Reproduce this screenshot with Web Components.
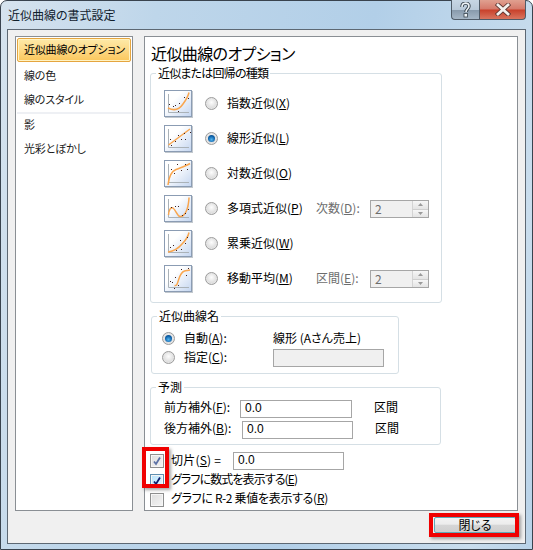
<!DOCTYPE html>
<html lang="ja">
<head>
<meta charset="utf-8">
<title>近似曲線の書式設定</title>
<style>
  html, body { margin: 0; padding: 0; background: #fff; }
  body {
    font: 12px/1 "Noto Sans CJK JP", "Liberation Sans", sans-serif;
    font-feature-settings: "palt";
    color: #000;
  }
</style>
</head>
<body>
<format-dialog caption="近似曲線の書式設定">
  <side-list slot="side">
    <side-item selected>近似曲線のオプション</side-item>
    <side-item>線の色</side-item>
    <side-item>線のスタイル</side-item>
    <side-sep></side-sep>
    <side-item>影</side-item>
    <side-item>光彩とぼかし</side-item>
  </side-list>

  <option-panel heading="近似曲線のオプション">
    <group-box legend="近似または回帰の種類" style="--w:292px;--h:230px;--pad:16px 0 0 13px;--ml:0;--ls:-0.8px">
      <trend-row type="exp">指数近似(<u>X</u>)</trend-row>
      <trend-row type="line" checked>線形近似(<u>L</u>)</trend-row>
      <trend-row type="log">対数近似(<u>O</u>)</trend-row>
      <trend-row type="poly">多項式近似(<u>P</u>)<span slot="sub">次数(<u>D</u>):</span><spin-box slot="spin" value="2"></spin-box></trend-row>
      <trend-row type="pow">累乗近似(<u>W</u>)</trend-row>
      <trend-row type="avg">移動平均(<u>M</u>)<span slot="sub">区間(<u>E</u>):</span><spin-box slot="spin" value="2"></spin-box></trend-row>
    </group-box>

    <group-box legend="近似曲線名" style="--w:248px;--h:58px;--pad:12px 0 0 10px;--ml:1px;--mt:13px">
      <name-row checked label="自動(A):"><span>線形 (Aさん売上)</span></name-row>
      <name-row label="指定(C):"><text-input disabled style="--iw:111px"></text-input></name-row>
    </group-box>

    <group-box legend="予測" style="--w:291px;--h:58px;--pad:10px 0 0 13px;--ml:0;--mt:13px">
      <forecast-row style="--lw:76px;--iw:112px">前方補外(<u>F</u>):</forecast-row>
      <forecast-row style="--lw:78px;--iw:111px">後方補外(<u>B</u>):</forecast-row>
    </group-box>

    <check-row style="--rh:20px;margin-top:6px;--ls:0.2px" checked state="dim">切片(<u>S</u>) =<text-input slot="after" value="0.0" style="--iw:111px"></text-input></check-row>
    <check-row style="--rh:19px;--ls:-0.9px" checked state="hot">グラフに数式を表示する(<u>E</u>)</check-row>
    <check-row style="--rh:19px;--ls:-0.3px">グラフに R-2 乗値を表示する(<u>R</u>)</check-row>
  </option-panel>

  <glass-button slot="footer">閉じる</glass-button>

  <red-mark slot="marks" style="left:142px;top:447px;width:27px;height:41px"></red-mark>
  <red-mark slot="marks" style="left:429px;top:513px;width:90px;height:24px"></red-mark>
</format-dialog>

<script>
(function () {
    function define(name, css, html, ready) {
        const template = document.createElement("template");
        template.innerHTML = `<style>${css}</style>${html}`;
        class Element extends HTMLElement {
            constructor() {
                super();
                this.attachShadow({ mode: "open" });
                this.shadowRoot.appendChild(template.content.cloneNode(true));
            }
            connectedCallback() {
                if (ready) ready(this, this.shadowRoot);
            }
        }
        customElements.define(name, Element);
    }

    /* Window */
    define("format-dialog", `
    :host {
        background: linear-gradient(100deg, #d6e3ee 0%, #bed6ea 25%, #b2cfe8 60%, #c9dded 90%, #b8d2e8 100%);
        border: 1px solid #39434e;
        border-radius: 7px 7px 0 0;
        box-sizing: border-box;
        display: flex;
        flex-direction: column;
        height: 550px;
        position: relative;
        width: 533px;
    }
    .titlebar {
        align-items: flex-start;
        display: flex;
        flex: none;
        height: 28px;
        justify-content: space-between;
    }
    .caption {
        color: #10202c;
        line-height: 16px;
        padding: 6px 0 0 7px;
    }
    .buttons {
        display: flex;
        height: 20px;
        margin-right: 6px;
        margin-top: -1px;
    }
    .help, .close {
        align-items: center;
        border: 1px solid #4f5b68;
        border-top: none;
        box-sizing: border-box;
        display: flex;
        justify-content: center;
    }
    .help {
        background: linear-gradient(#c7d6e4 0%, #b9c9d9 50%, #8799ab 52%, #a5b6c6 100%);
        border-radius: 0 0 0 4px;
        border-right: none;
        width: 28px;
    }
    .close {
        background: linear-gradient(#e0a090 0%, #d5796a 48%, #c8402a 52%, #d9755f 100%);
        border-radius: 0 0 4px 0;
        width: 47px;
    }
    .client {
        background: #f0f0f0;
        border: 1px solid #5d6873;
        display: flex;
        flex: 1;
        flex-direction: column;
        margin: 0 6px 5px 6px;
        min-height: 0;
        padding: 6px 7px 0 7px;
    }
    .main {
        display: flex;
        gap: 11px;
        height: 475px;
    }
    .footer {
        display: flex;
        justify-content: flex-end;
        padding: 6px 2px 0 0;
    }`, `
    <div class="titlebar">
        <div class="caption"></div>
        <div class="buttons">
            <div class="help">
                <svg width="13" height="16" viewBox="0 0 13 16"><path d="M3 5c0-5 7-5 7-1 0 3-3 3-3 6" fill="none" stroke="#39454f" stroke-width="3.4"/><path d="M3 5c0-5 7-5 7-1 0 3-3 3-3 6" fill="none" stroke="#eef3f7" stroke-width="1.6"/><rect x="5" y="11.500" width="3.500" height="3.500" fill="#eef3f7" stroke="#39454f" stroke-width=".8"/></svg>
            </div>
            <div class="close">
                <svg width="16" height="13" viewBox="0 0 16 13"><path d="M3 2l10 9M13 2L3 11" stroke="#5c3530" stroke-width="4.400" stroke-linecap="square"/><path d="M3 2l10 9M13 2L3 11" stroke="#f4f1ee" stroke-width="2.800" stroke-linecap="square"/></svg>
            </div>
        </div>
    </div>
    <div class="client">
        <div class="main"><slot name="side"></slot><slot></slot></div>
        <div class="footer"><slot name="footer"></slot></div>
    </div>
    <slot name="marks"></slot>
    `, (el, root) => {
        root.querySelector(".caption").textContent = el.getAttribute("caption");
    });

    /* Red annotation boxes drawn over the shot */
    define("red-mark", `
    :host {
        border: 4px solid #f00000;
        box-shadow: 2px 2px 3px rgba(60, 60, 60, 0.45);
        box-sizing: border-box;
        display: block;
        margin: -1px 0 0 -1px;
        pointer-events: none;
        position: absolute;
    }`, "");

    /* Left list */
    define("side-list", `
    :host {
        background: #fff;
        border: 1px solid #8a8f94;
        box-sizing: border-box;
        display: block;
        flex: none;
        font-size: 11px;
        height: 475px;
        letter-spacing: -0.2px;
        padding: 1px;
        width: 118px;
    }`, "<slot></slot>");

    define("side-item", `
    :host {
        border: 1px solid transparent;
        border-radius: 2px;
        box-sizing: border-box;
        color: #1a1a1a;
        display: block;
        height: 24px;
        line-height: 20px;
        padding-left: 6px;
        white-space: nowrap;
    }
    :host([selected]) {
        background: linear-gradient(#fdeaa8, #fdd986 50%, #fbc75c);
        border-color: #e5a53f;
        box-shadow: inset 0 0 0 1px #fff3c4;
        color: #000;
        margin-bottom: 2px;
    }`, "<slot></slot>");

    define("side-sep", `
    :host {
        background: #eef0f4;
        display: block;
        height: 2px;
        margin-bottom: -1px;
    }`, "");

    /* Right panel */
    define("option-panel", `
    :host {
        background: #fff;
        border: 1px solid #8a8f94;
        box-sizing: border-box;
        display: block;
        height: 475px;
        padding: 0 0 0 5px;
        width: 374px;
    }
    h2 {
        font-size: 16px;
        font-weight: 400;
        height: 36px;
        letter-spacing: -0.6px;
        line-height: 32px;
        margin: 0;
        padding-left: 1px;
        white-space: nowrap;
    }`, `<h2></h2><slot></slot>`, (el, root) => {
        root.querySelector("h2").textContent = el.getAttribute("heading");
    });

    define("group-box", `
    :host {
        border: 1px solid #d5dfe5;
        border-radius: 3px;
        box-sizing: border-box;
        display: block;
        height: var(--h);
        margin-left: var(--ml, 0);
        margin-top: var(--mt, 0);
        padding: var(--pad);
        position: relative;
        width: var(--w);
    }
    .legend {
        background: #fff;
        left: 5px;
        letter-spacing: var(--ls, 0);
        line-height: 14px;
        padding: 0 2px;
        position: absolute;
        top: -8px;
        white-space: nowrap;
    }`, `<div class="legend"></div><slot></slot>`, (el, root) => {
        root.querySelector(".legend").textContent = el.getAttribute("legend");
    });

    /* Icons for the trendline kinds */
    const curves = {
        exp: { d: "M4 18C10 21 15 20 19 14C22 10 24 7 25 2.500", dots: [[5, 14], [9, 16], [11, 15], [15, 13], [14, 21], [20, 7], [24, 8]] },
        line: { d: "M4.500 20L26 4", dots: [[6, 14], [7, 20], [11, 16], [14, 10], [17, 14], [20, 8], [26, 7], [21, 14]] },
        log: { d: "M4 25C5 16 8 11 12 9.500C17 7.500 22 6 26 3.500", dots: [[7, 9], [10, 13], [13, 4], [17, 10], [21, 4], [23, 9]] },
        poly: { d: "M4.500 20C5 14 7 12 9 13C12 15 13 21 16 21.500C20 22 23 16 24 11C24.500 8 25 5 25 2.500", dots: [[7, 12], [11, 11], [14, 11], [18, 20], [24, 14], [21, 18]] },
        pow: { d: "M4 22C10 21 14 19 18 14C21 11 24 7 25 2.500", dots: [[6, 17], [9, 15], [12, 20], [16, 10], [17, 19], [21, 13], [23, 7]] },
        avg: { d: "M10.500 20.500C12.500 21 13 20 14.500 15C16 10 17.500 7 20.500 6C22 5.500 24 5.500 26 5", dots: [[6, 16], [8, 17], [11, 12], [10, 23], [14, 20], [17, 4], [22, 10], [24, 3]] }
    };

    /* Radio bullet */
    define("radio-dot", `
    :host {
        background: radial-gradient(circle at 50% 40%, #fdfdfd, #dfdfdf 60%, #c4c4c4);
        border: 1px solid #9c9c9c;
        border-radius: 50%;
        box-shadow: inset 0 0 0 1px #e6e6e6;
        box-sizing: border-box;
        display: block;
        flex: none;
        height: 13px;
        position: relative;
        width: 13px;
    }
    :host([checked])::after {
        background: radial-gradient(circle at 50% 65%, #52b4ee, #0b5fa8 60%, #0a3c70);
        border-radius: 50%;
        content: "";
        height: 7px;
        left: 2px;
        position: absolute;
        top: 2px;
        width: 7px;
    }`, "");

    define("trend-row", `
    :host {
        align-items: center;
        display: flex;
        height: 28px;
        margin-bottom: 7px;
    }
    svg { display: block; flex: none; }
    radio-dot { margin: 0 9px 2px 12px; }
    .label { flex: none; padding-bottom: 3px; white-space: nowrap; width: 89px; }
    .sub { color: #6d6d6d; flex: none; padding-bottom: 3px; white-space: nowrap; width: 54px; }
    `, `
    <svg width="29" height="28" viewBox="0 0 29 28">
        <defs>
            <linearGradient id="bg" x1="0" y1="0" x2="1" y2="1">
                <stop offset="0.35" stop-color="#ffffff"/>
                <stop offset="1" stop-color="#c3d5f0"/>
            </linearGradient>
        </defs>
        <rect x="1" y="1" width="28" height="27" fill="#9aa3ad" opacity=".6"/>
        <rect x="0.500" y="0.500" width="27" height="26" fill="url(#bg)" stroke="#8b9cb3"/>
        <path d="M4.500 4V22.500H25" fill="none" stroke="#aab2b8"/>
        <path class="curve" fill="none" stroke="#f9a64f" stroke-width="1.500"/>
        <g class="dots" fill="#3c2020"></g>
    </svg>
    <radio-dot></radio-dot>
    <div class="label"><slot></slot></div>
    <div class="sub"><slot name="sub"></slot></div>
    <slot name="spin"></slot>`, (el, root) => {
        const info = curves[el.getAttribute("type")];
        root.querySelector(".curve").setAttribute("d", info.d);
        root.querySelector(".dots").innerHTML = info.dots
            .map(p => `<rect x="${p[0]}" y="${p[1]}" width="1" height="1"/>`).join("");
        if (el.hasAttribute("checked")) root.querySelector("radio-dot").setAttribute("checked", "");
    });

    define("spin-box", `
    :host {
        background: #f0f0f0;
        border: 1px solid #a6a6a6;
        box-sizing: border-box;
        color: #6d6d6d;
        display: flex;
        height: 18px;
        width: 59px;
    }
    .value { flex: 1; line-height: 15px; padding-left: 4px; }
    .arrows { display: flex; flex: none; flex-direction: column; width: 16px; }
    .arrows div {
        align-items: center;
        background: linear-gradient(#f7f7f7, #e4e4e4);
        border-left: 1px solid #d4d4d4;
        display: flex;
        flex: 1;
        justify-content: center;
    }
    .arrows div + div { border-top: 1px solid #cfcfcf; }
    `, `
    <div class="value"></div>
    <div class="arrows">
        <div><svg width="5" height="3"><path d="M0 3L2.500 0L5 3z" fill="#9a9a9a"/></svg></div>
        <div><svg width="5" height="3"><path d="M0 0L2.500 3L5 0z" fill="#9a9a9a"/></svg></div>
    </div>`, (el, root) => {
        root.querySelector(".value").textContent = el.getAttribute("value");
    });

    define("text-input", `
    :host {
        background: #fff;
        border: 1px solid #a6a6a6;
        box-sizing: border-box;
        display: block;
        flex: none;
        font-family: "Liberation Sans", sans-serif;
        height: 18px;
        letter-spacing: 0;
        line-height: 15px;
        padding-left: 4px;
        width: var(--iw);
    }
    :host([disabled]) { background: #f0f0f0; }`, `<span class="value"></span>`, (el, root) => {
        root.querySelector(".value").textContent = el.getAttribute("value") || "";
    });

    define("name-row", `
    :host {
        align-items: center;
        display: flex;
        height: 19px;
    }
    radio-dot { margin: 0 9px 1px 0; }
    .label { flex: none; padding-bottom: 2px; white-space: nowrap; width: 89px; }
    ::slotted(span) { padding-bottom: 2px; white-space: nowrap; }
    `, `<radio-dot></radio-dot><div class="label"></div><slot></slot>`, (el, root) => {
        const m = el.getAttribute("label").match(/^(.*\()(.)(\):)$/);
        root.querySelector(".label").innerHTML = `${m[1]}<u>${m[2]}</u>${m[3]}`;
        if (el.hasAttribute("checked")) root.querySelector("radio-dot").setAttribute("checked", "");
    });

    define("forecast-row", `
    :host {
        align-items: center;
        display: flex;
        height: 21px;
    }
    .label { flex: none; padding-bottom: 3px; white-space: nowrap; width: var(--lw); }
    .unit { margin-left: 22px; padding-bottom: 3px; white-space: nowrap; }
    `, `
    <div class="label"><slot></slot></div>
    <text-input value="0.0"></text-input>
    <div class="unit">区間</div>`);

    /* Check boxes at the foot of the panel */
    define("check-row", `
    :host {
        align-items: center;
        display: flex;
        height: var(--rh);
        white-space: nowrap;
    }
    .box {
        align-items: center;
        background: linear-gradient(135deg, #dedede, #f4f4f4);
        border: 1px solid #8e8f8f;
        box-shadow: inset 0 0 0 1px #f6f6f6;
        box-sizing: border-box;
        display: flex;
        flex: none;
        height: 14px;
        justify-content: center;
        margin: 0 7px 0 0;
        width: 14px;
    }
    :host([state="hot"]) .box {
        background: linear-gradient(135deg, #b9e3fb, #e2f5ff);
        border-color: #5f8fb0;
    }
    svg { display: none; }
    :host([checked]) svg { display: block; }
    :host([state="dim"]) svg path { stroke: #5d72a6; }
    .text { letter-spacing: var(--ls, 0); min-width: 62px; padding-bottom: 3px; }
    `, `
    <div class="box"><svg width="10" height="10" viewBox="0 0 10 10"><path d="M2 5.500L4 8L8 1.500" fill="none" stroke="#0e1f6e" stroke-width="1.800"/></svg></div>
    <div class="text"><slot></slot></div>
    <slot name="after"></slot>`);

    define("glass-button", `
    :host {
        background: linear-gradient(#f3f3f3, #ececec 45%, #d6d6d6 50%, #cfcfcf);
        border: 1px solid #5fa9b8;
        border-radius: 2px;
        box-sizing: border-box;
        display: block;
        height: 16px;
        line-height: 13px;
        text-align: center;
        width: 82px;
    }`, "<slot></slot>");
})();
</script>
</body>
</html>
